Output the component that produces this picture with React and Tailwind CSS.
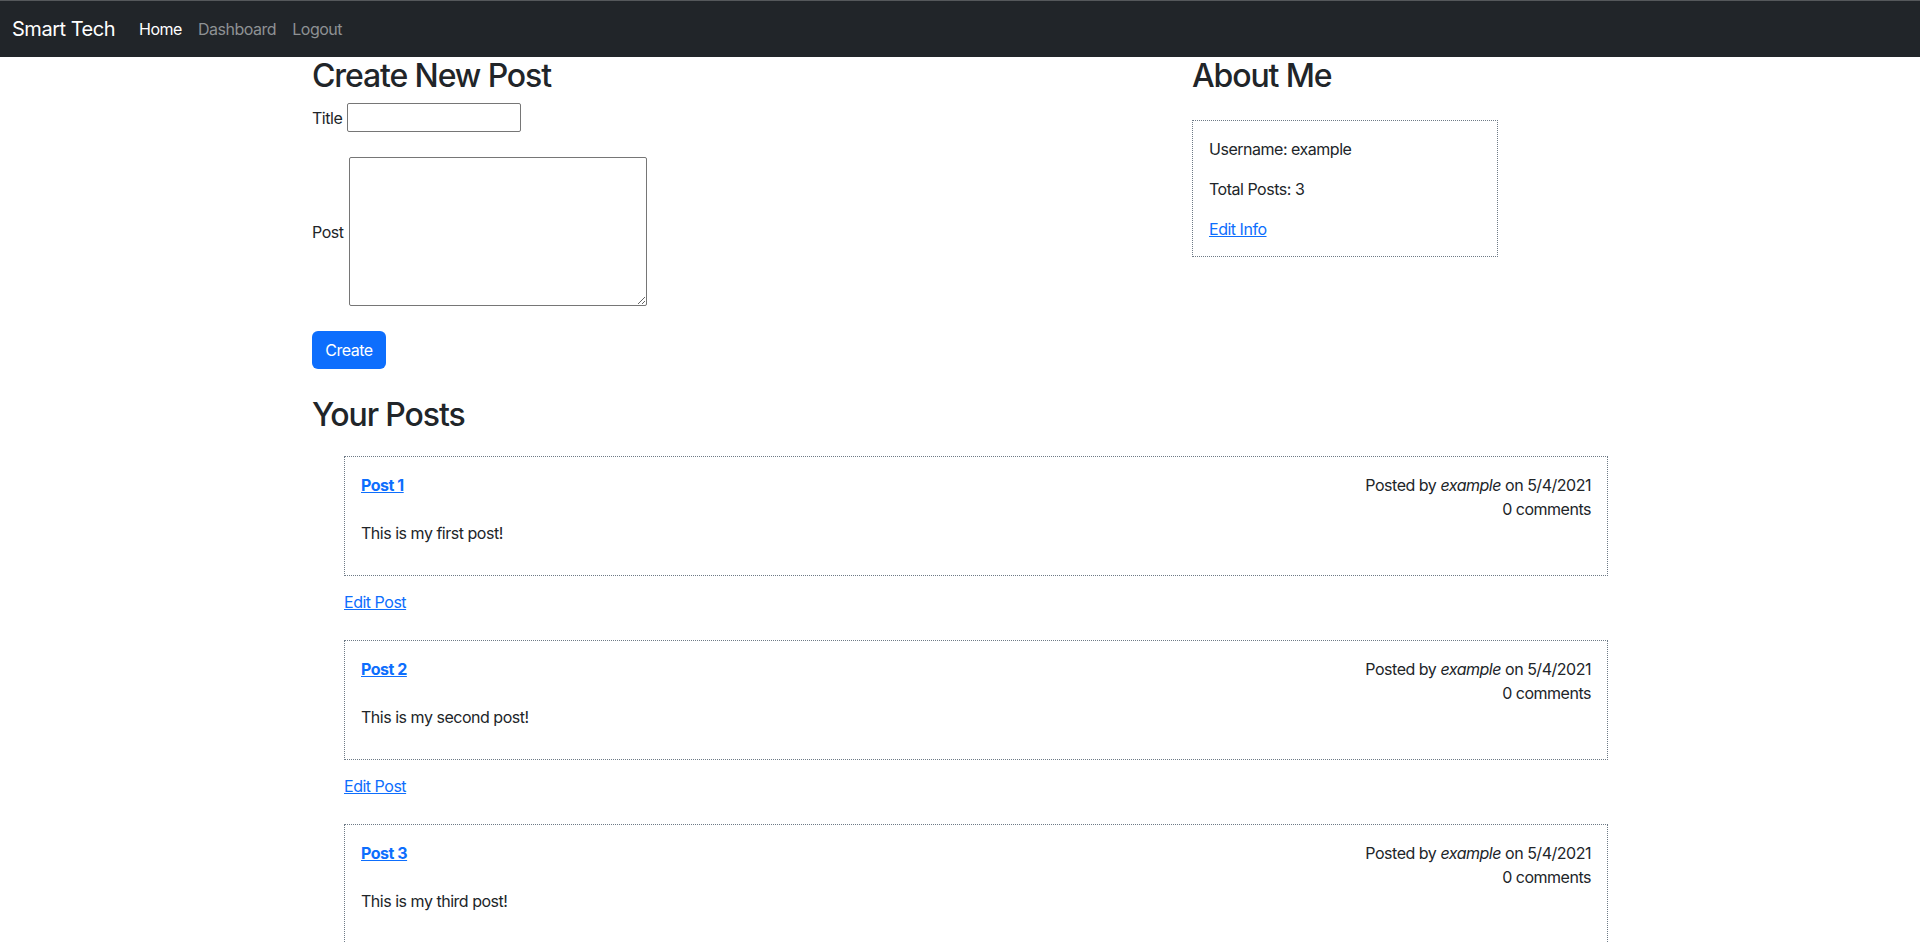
import React from "react";

const posts = [
  { id: 1, title: "Post 1", body: "This is my first post!" },
  { id: 2, title: "Post 2", body: "This is my second post!" },
  { id: 3, title: "Post 3", body: "This is my third post!" },
];

export default function App() {
  return (
    <div
      className="min-h-screen bg-white text-[#212529] text-base leading-normal tracking-[-0.03em]"
      style={{ fontFamily: "Inter, 'Liberation Sans', sans-serif" }}
    >
      {/* Navbar */}
      <nav className="h-[57px] bg-[#212529] border-t border-[#55585b] flex items-center px-3">
        <a href="#" className="text-white text-[20px] leading-[30px] mr-4">
          Smart Tech
        </a>
        <div className="flex items-center">
          <a href="#" className="text-white px-2">Home</a>
          <a href="#" className="text-[#8e9194] px-2">Dashboard</a>
          <a href="#" className="text-[#8e9194] px-2">Logout</a>
        </div>
      </nav>

      <div className="mx-auto w-[1320px] px-3">
        <div className="grid grid-cols-[856px_1fr] gap-x-6">
          {/* Create post form */}
          <div>
            <h2 className="text-[32px] leading-[38px] font-medium tracking-[-0.035em] mb-2">
              Create New Post
            </h2>
            <form onSubmit={(e) => e.preventDefault()}>
              <div className="flex items-center gap-[5px]">
                <label htmlFor="title">Title</label>
                <input
                  id="title"
                  type="text"
                  className="w-[174px] h-[29px] border border-[#767676] rounded-[2px] px-1"
                />
              </div>
              <div className="flex items-center gap-[5px] mt-[25px]">
                <label htmlFor="post">Post</label>
                <textarea
                  id="post"
                  className="w-[298px] h-[149px] border border-[#767676] rounded-[2px] px-1"
                ></textarea>
              </div>
              <button
                type="submit"
                className="mt-[25px] bg-[#0d6efd] text-white rounded-md w-[74px] h-[38px] flex items-center justify-center"
              >
                Create
              </button>
            </form>
          </div>

          {/* About me */}
          <div>
            <h2 className="text-[32px] leading-[38px] font-medium tracking-[-0.035em]">
              About Me
            </h2>
            <div className="mt-[25px] w-[306px] border border-dotted border-[#6e7a86] px-4 pt-4 pb-[15px]">
              <p className="mb-4">Username: example</p>
              <p className="mb-4">Total Posts: 3</p>
              <a href="#" className="text-[#0d6efd] underline">
                Edit Info
              </a>
            </div>
          </div>
        </div>

        <h2 className="mt-[27px] text-[32px] leading-[38px] font-medium tracking-[-0.035em]">
          Your Posts
        </h2>

        <ul className="mt-[22px] pl-8">
          {posts.map((post) => (
            <li key={post.id} className="mb-[26px]">
              <div className="border border-dotted border-[#6e7a86] p-4">
                <div className="flex justify-between items-start">
                  <a href="#" className="font-bold text-[#0d6efd] underline">
                    {post.title}
                  </a>
                  <div className="text-right">
                    <p>
                      Posted by <em>example</em> on 5/4/2021
                    </p>
                    <p>0 comments</p>
                  </div>
                </div>
                <p className="mb-[14px]">{post.body}</p>
              </div>
              <a href="#" className="inline-block mt-[14px] text-[#0d6efd] underline">
                Edit Post
              </a>
            </li>
          ))}
        </ul>
      </div>
    </div>
  );
}
